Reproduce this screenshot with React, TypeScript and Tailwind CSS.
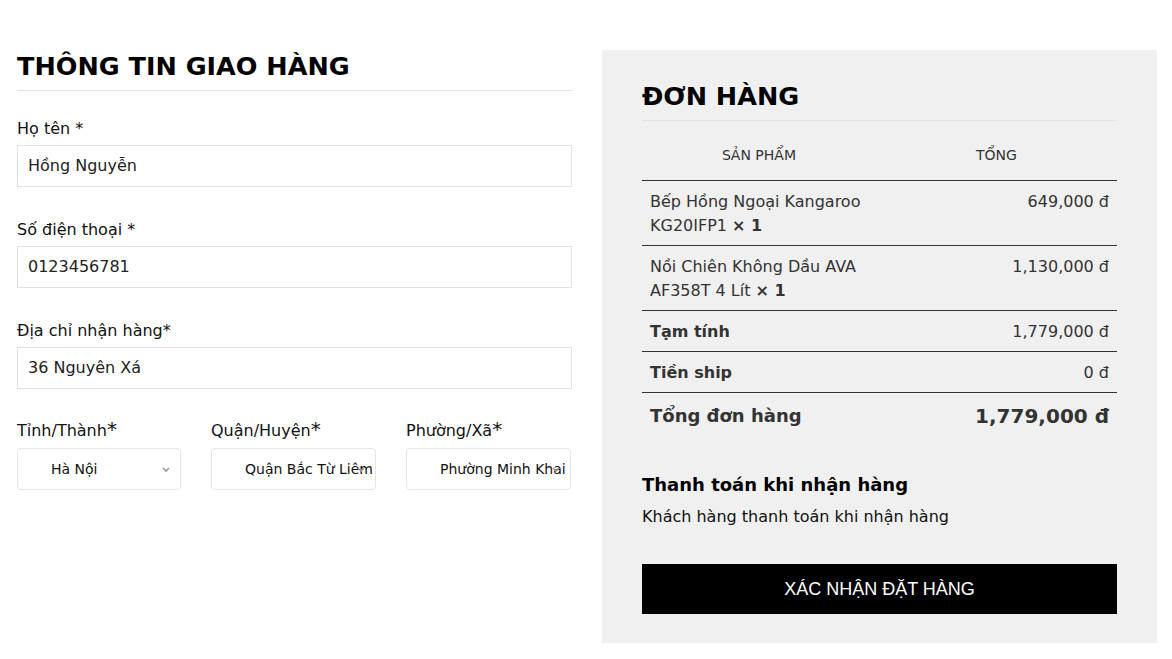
import React from "react";

const body = { fontFamily: '"DejaVu Sans", Verdana, sans-serif' };
const arial = { fontFamily: '"Liberation Sans", Arial, sans-serif' };

function Field({ label, value, first }: { label: string; value: string; first?: boolean }) {
    return (
        <div className={first ? "mt-[26px]" : "mt-[31px]"}>
            <label className="block text-[16px] leading-[24px] text-[#111]">{label}</label>
            <div className="mt-[4px] flex h-[42px] items-center border border-[#e2e2e6] bg-white px-[10px] text-[16px] text-[#222]">
                {value}
            </div>
        </div>
    );
}

function SelectBox({ label, value }: { label: string; value: string }) {
    return (
        <div>
            <label className="block text-[16px] leading-[24px] text-[#111]">
                {label}
                <span className="text-[20px] leading-none">*</span>
            </label>
            <div className="relative mt-[5px] flex h-[42px] items-center overflow-hidden whitespace-nowrap rounded-[4px] border border-[#e5e5e8] bg-white pl-[33px] text-[14px] text-[#111]">
                {value}
                <svg className="absolute right-[10px] top-[18px]" width="8" height="6" viewBox="0 0 8 6">
                    <path d="M1 1l3 3 3-3" stroke="#999" strokeWidth="1.6" fill="none" />
                </svg>
            </div>
        </div>
    );
}

export default function App() {
    const items = [
        { name: "Bếp Hồng Ngoại Kangaroo KG20IFP1", price: "649,000 đ" },
        { name: "Nồi Chiên Không Dầu AVA AF358T 4 Lít", price: "1,130,000 đ" },
    ];

    return (
        <div style={body} className="flex min-h-[659px] gap-[30px] bg-white pl-[17px] pr-[15px] pt-[50px]">
            {/* Left - shipping info */}
            <section className="w-[555px]">
                <h2 className="border-b border-[#e3e3e8] pb-[8px] text-[25.5px] font-bold leading-[32px] text-black">
                    THÔNG TIN GIAO HÀNG
                </h2>
                <Field first label="Họ tên *" value="Hồng Nguyễn" />
                <Field label="Số điện thoại *" value="0123456781" />
                <Field label="Địa chỉ nhận hàng*" value="36 Nguyên Xá" />
                <div className="mt-[30px] grid grid-cols-[164px_165px_165px] gap-[30px]">
                    <SelectBox label="Tỉnh/Thành" value="Hà Nội" />
                    <SelectBox label="Quận/Huyện" value="Quận Bắc Từ Liêm" />
                    <SelectBox label="Phường/Xã" value="Phường Minh Khai" />
                </div>
            </section>

            {/* Right - order summary */}
            <section className="h-[593px] w-[555px] bg-[#f0f0f0] px-[40px] pt-[30px]">
                <h2 className="border-b border-[#e0e0e6] pb-[8px] text-[25.5px] font-bold leading-[32px] text-black">
                    ĐƠN HÀNG
                </h2>
                <div className="text-[16px] text-[#333]">
                    <div className="grid h-[60px] grid-cols-[234px_1fr] items-center border-b border-[#333] text-[14px] uppercase text-[#333]">
                        <div className="pt-[10px] text-center">Sản phẩm</div>
                        <div className="pt-[10px] text-center">Tổng</div>
                    </div>
                    {items.map((it) => (
                        <div key={it.name} className="grid grid-cols-[234px_1fr] border-b border-[#333] px-[8px] pb-[7px] pt-[9px] leading-[24px]">
                            <div>
                                {it.name} <strong className="font-bold">× 1</strong>
                            </div>
                            <div className="text-right">{it.price}</div>
                        </div>
                    ))}
                    <div className="flex justify-between border-b border-[#333] px-[8px] pb-[7px] pt-[9px] leading-[24px]">
                        <strong className="font-bold">Tạm tính</strong>
                        <span>1,779,000 đ</span>
                    </div>
                    <div className="flex justify-between border-b border-[#333] px-[8px] pb-[7px] pt-[9px] leading-[24px]">
                        <strong className="font-bold">Tiền ship</strong>
                        <span>0 đ</span>
                    </div>
                    <div className="flex items-center justify-between px-[8px] pb-[7px] pt-[9px] leading-[28px]">
                        <strong className="text-[18px] font-bold">Tổng đơn hàng</strong>
                        <strong className="text-[20px] font-bold">1,779,000 đ</strong>
                    </div>
                </div>

                <div className="mt-[36px] text-[18px] font-bold leading-[24px] text-black">Thanh toán khi nhận hàng</div>
                <div className="mt-[8px] text-[16px] leading-[24px] text-[#111]">Khách hàng thanh toán khi nhận hàng</div>

                <button
                    style={arial}
                    className="mt-[35px] flex h-[50px] w-full items-center justify-center bg-black text-[18px] uppercase text-white"
                >
                    Xác nhận đặt hàng
                </button>
            </section>
        </div>
    );
}
